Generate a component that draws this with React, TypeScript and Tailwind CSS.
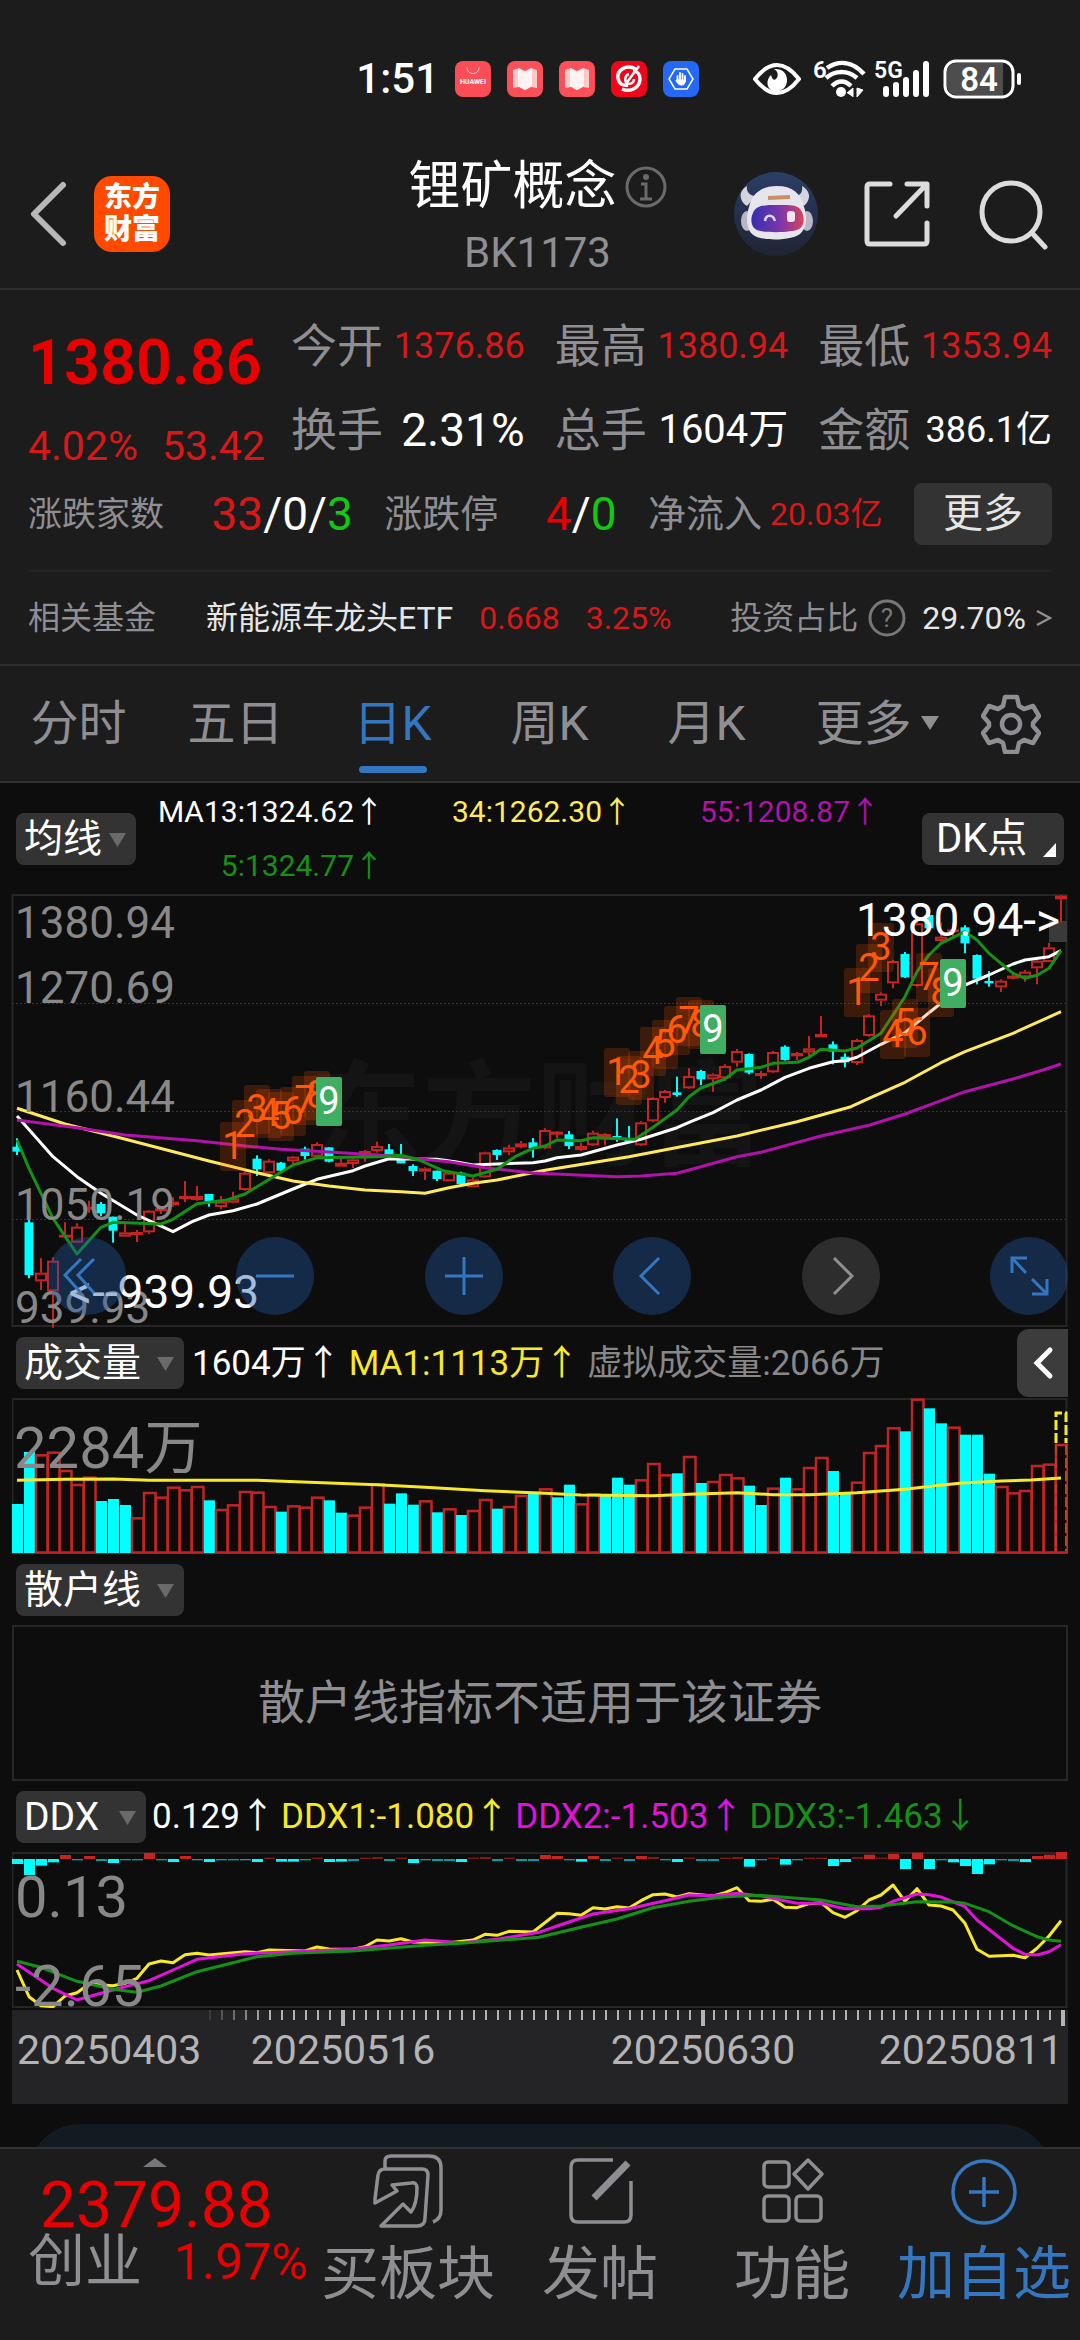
import { ReactNode } from "react";

type Kind = "c" | "r";

// [kind, high, low, body top, body bottom], in thirds of a pixel
const candles: [Kind, number, number, number, number][] = [
  ["c", 745, 795, 770, 785], ["c", 990, 1165, 997, 1155], ["r", 1105, 1200, 1148, 1174],
  ["r", 1102, 1313, 1112, 1204], ["r", 997, 1040, 1034, 1040], ["r", 1000, 1058, 1010, 1058],
  ["r", 932, 968, 950, 956], ["c", 936, 978, 942, 970], ["c", 980, 1058, 980, 1022],
  ["r", 1003, 1040, 1027, 1040], ["r", 1020, 1056, 1026, 1034], ["r", 960, 1032, 962, 1027],
  ["r", 950, 972, 955, 962], ["r", 922, 950, 935, 946], ["r", 873, 936, 918, 925],
  ["r", 888, 932, 918, 930], ["c", 912, 950, 912, 934], ["r", 918, 957, 935, 951],
  ["r", 905, 940, 925, 938], ["r", 842, 902, 848, 900], ["c", 796, 858, 806, 838],
  ["r", 808, 852, 812, 850], ["c", 816, 850, 818, 842], ["r", 798, 826, 800, 814],
  ["c", 770, 808, 776, 798], ["r", 757, 803, 762, 800], ["c", 772, 817, 772, 815],
  ["r", 800, 830, 818, 830], ["r", 798, 834, 808, 822], ["r", 780, 815, 783, 798],
  ["r", 755, 788, 768, 783], ["c", 762, 795, 778, 794], ["c", 762, 820, 810, 820],
  ["c", 823, 858, 828, 843], ["r", 832, 870, 835, 845], ["c", 842, 873, 842, 867],
  ["r", 845, 874, 848, 874], ["c", 845, 885, 848, 882], ["r", 862, 892, 868, 892],
  ["r", 785, 863, 787, 862], ["c", 778, 810, 780, 795], ["r", 764, 795, 772, 787],
  ["r", 753, 775, 760, 772], ["c", 744, 803, 757, 775], ["r", 715, 778, 720, 775],
  ["r", 723, 745, 725, 730], ["c", 723, 777, 733, 768], ["r", 758, 782, 768, 780],
  ["r", 722, 768, 728, 766], ["r", 730, 766, 732, 737], ["c", 685, 755, 738, 743],
  ["c", 708, 755, 748, 753], ["r", 693, 768, 697, 766], ["r", 622, 697, 624, 694],
  ["r", 600, 638, 603, 624], ["c", 560, 620, 607, 615], ["r", 535, 597, 558, 595],
  ["c", 540, 585, 543, 568], ["r", 550, 605, 553, 568], ["r", 523, 573, 528, 565],
  ["r", 477, 530, 483, 518], ["c", 490, 553, 492, 548], ["r", 543, 566, 549, 557],
  ["r", 482, 549, 486, 547], ["c", 466, 512, 470, 510], ["r", 486, 510, 489, 499],
  ["r", 438, 508, 475, 488], ["r", 378, 442, 432, 442], ["c", 454, 523, 463, 485],
  ["c", 490, 532, 500, 517], ["r", 446, 525, 450, 519], ["r", 373, 440, 376, 438],
  ["r", 307, 348, 311, 332], ["r", 210, 295, 213, 280], ["c", 186, 264, 192, 262],
  ["r", 95, 290, 100, 288], ["c", 68, 125, 75, 115], ["r", 97, 155, 140, 153],
  ["r", 100, 140, 118, 125], ["c", 106, 190, 112, 160], ["c", 193, 283, 195, 266],
  ["c", 243, 290, 273, 280], ["r", 268, 306, 272, 292], ["r", 250, 268, 257, 262],
  ["r", 240, 275, 245, 262], ["r", 205, 283, 212, 235], ["r", 158, 216, 172, 216],
  ["r", 15, 95, 17, 28],
];

const volumeTops = [
  552, 396, 403, 395, 450, 492, 470, 543, 537, 555, 592, 516, 530, 500, 508, 498, 541, 567, 553, 513,
  515, 558, 575, 556, 560, 530, 541, 578, 584, 560, 490, 551, 520, 554, 541, 577, 565, 585, 570, 537,
  566, 558, 525, 520, 505, 532, 494, 550, 520, 525, 473, 494, 478, 429, 463, 460, 408, 489, 483, 462,
  472, 497, 555, 503, 473, 505, 441, 411, 453, 522, 485, 396, 375, 322, 334, 236, 265, 310, 320, 344,
  344, 461, 498, 517, 510, 435, 431, 372,
];
const volumeDown = [
  0, 1, 7, 8, 9, 16, 22, 26, 27, 31, 32, 33, 35, 37, 40, 43, 45, 46, 49, 50, 51, 55, 57, 61, 62, 64,
  68, 69, 74, 76, 77, 79, 80, 81,
];

const ddxBars = [
  -15, -48, -20, -10, 12, -4, 9, -6, -12, -4, -4, 18, -4, -9, 9, -4, -9, -4, -4, -4, -9, 4, -8, -8, -4,
  4, -9, -8, -6, 4, 6, -6, 4, -12, -4, -6, -6, -9, 4, 6, -6, 4, -6, -6, 12, 9, -4, -8, 9, -6, 4, -6, 9,
  6, -4, -9, 4, -6, -6, 4, 6, -23, -4, 4, -17, -4, 4, 4, -21, -9, 6, 13, 4, 15, -30, 19, -30, -4, -10,
  -21, -45, -16, -4, -6, -9, 9, 13, 21,
];

type Series = [number, number][];

const ma13: Series = [
  [0, 678], [3, 800], [5, 860], [7, 910], [10, 975], [13, 1025], [14.6, 995], [16, 975], [18, 962],
  [20, 942], [23, 897], [25, 868], [28, 842], [29, 828], [31, 806], [35, 808], [36.5, 815], [38, 825],
  [40, 822], [43, 818], [44, 813], [45, 803], [47, 795], [50, 765], [52, 748], [55, 713], [56, 697],
  [58, 668], [60, 630], [62, 600], [64, 562], [66, 535], [68, 515], [69, 512], [70, 502], [72, 463],
  [74, 428], [76, 368], [77, 340], [79, 285], [81, 255], [83, 222], [84, 210], [86, 200], [87, 182],
];
const ma34: Series = [
  [0, 655], [4, 702], [8, 738], [16, 813], [20, 848], [23, 873], [26, 888], [29, 900], [32, 905],
  [34, 910], [36, 893], [38, 880], [40, 870], [44, 841], [51, 800], [60, 738], [65, 695], [69.5, 650],
  [71, 625], [74, 577], [77, 518], [79, 485], [83, 430], [87, 365],
];
const ma55: Series = [
  [0, 690], [5, 713], [9, 735], [15, 752], [19, 768], [22, 778], [26, 786], [31, 797], [33, 805],
  [36, 815], [39, 833], [43, 849], [50, 860], [52, 858], [55, 850], [56, 840], [60, 800], [62, 787],
  [67, 738], [71, 706], [74, 672], [77, 632], [79, 605], [83, 567], [85.5, 540], [87, 522],
];
const ma5: Series = [
  [0, 750], [1, 835], [3, 985], [5, 1092], [7, 1012], [8, 997], [12, 1002], [13, 988], [15, 941],
  [17.5, 930], [19, 912], [20, 890], [23, 825], [25, 803], [30, 800], [32, 796], [33.5, 810],
  [35.5, 842], [38, 858], [40, 838], [41.5, 800], [43, 775], [44, 768], [45, 750], [47, 752],
  [48, 743], [51.5, 748], [53, 712], [55, 660], [56, 620], [57, 594], [59, 567], [60, 540], [62, 532],
  [63, 520], [65, 517], [66, 502], [67, 478], [69, 483], [70, 474], [72, 430], [74, 320], [75, 245],
  [76, 195], [77, 160], [79, 125], [80, 150], [81, 190], [83, 250], [84, 265], [85, 256], [86, 235],
  [87, 182],
];
const volumeMa: Series = [
  [0, 481], [4, 478], [8, 477], [11, 481], [20, 481], [26, 489], [30, 494], [34, 502], [39, 512],
  [44, 520], [47, 525], [53, 527], [56, 523], [60, 518], [63, 524], [66, 524], [70, 518], [74, 508],
  [76.5, 497], [79, 488], [82, 483], [84.5, 480], [87, 474],
];
const ddx1: Series = [
  [0, 390], [1, 470], [2, 497], [3, 500], [4, 468], [5, 458], [6, 432], [8, 437], [9, 430], [10, 415],
  [11, 372], [12, 363], [13, 368], [14, 344], [15, 340], [16, 345], [19, 335], [20, 338], [21, 330],
  [24, 333], [25, 321], [26, 327], [28, 328], [29, 320], [30, 300], [31, 303], [32, 296], [33, 306],
  [36, 308], [38, 300], [39, 283], [40, 286], [41, 274], [43, 276], [45, 220], [46, 221], [47, 226],
  [48, 203], [49, 207], [50, 200], [51, 204], [52, 182], [53, 164], [54, 162], [55, 171], [56, 161],
  [58, 168], [59, 158], [60, 143], [61, 182], [62, 184], [63, 178], [64, 202], [65, 203], [66, 191],
  [67, 188], [68, 218], [69, 232], [70, 212], [71, 180], [72, 165], [73, 135], [74, 184], [75, 146],
  [76, 195], [77, 198], [78, 210], [79, 250], [80, 328], [81, 349], [83, 346], [84, 353], [85, 325],
  [86, 288], [87, 242],
];
const ddx2: Series = [
  [0, 372], [3, 445], [5, 480], [7, 460], [9, 440], [11, 422], [13, 390], [15, 358], [19, 341],
  [24, 334], [28, 327], [31, 315], [34, 300], [37, 308], [40, 298], [42, 286], [43.5, 277], [45, 258],
  [48, 222], [51, 206], [54, 182], [56, 165], [58, 167], [60, 160], [62, 168], [65, 190], [67, 190],
  [69, 206], [71, 206], [72, 202], [73, 184], [75, 162], [76, 164], [77, 171], [79, 200], [80, 240],
  [83, 325], [84, 343], [85, 345], [86, 335], [87, 314],
];
const ddx3: Series = [
  [0, 364], [2, 382], [5, 424], [8, 448], [10, 457], [12, 438], [15, 395], [17, 377], [20, 350],
  [23, 340], [28, 333], [34, 316], [37, 310], [43.5, 292], [47, 262], [50, 237], [53, 203], [56, 184],
  [59, 170], [62, 166], [65, 175], [67, 180], [70, 200], [72, 198], [75, 185], [78, 186], [79, 190],
  [81, 215], [83, 257], [85, 290], [86, 300], [87, 304],
];

// nine-turn markers: [bar index, top, digit]
const turns: [number, number, number][] = [
  [18, 232, 1], [19, 210, 2], [20, 195, 3], [21, 199, 4], [22, 202, 5], [23, 197, 6], [24, 186, 7],
  [25, 181, 8], [26, 187, 9], [50, 158, 1], [51, 166, 2], [52, 161, 3], [53, 137, 4], [54, 130, 5],
  [55, 116, 6], [56, 107, 7], [57, 110, 8], [58, 115, 9], [70, 78, 1], [71, 54, 2], [72, 33, 3],
  [73, 120, 4], [74, 109, 5], [75, 118, 6], [76, 63, 7], [77, 78, 8], [78, 69, 9],
];

const xAt = (i: number) => 17 + i * 12;
const points = (s: Series) => s.map(([i, y]) => `${xAt(i)},${(y / 3).toFixed(1)}`).join(" ");

const Line = ({ data, color }: { data: Series; color: string }) => (
  <polyline points={points(data)} fill="none" stroke={color} strokeWidth={3} strokeLinejoin="round" />
);

const Frame = ({ y, height }: { y: number; height: number }) => (
  <rect x={12.5} y={y + 1} width={1054} height={height - 2} fill="none" stroke="#262626" strokeWidth={2} />
);

const StatusBar = () => (
  <div className="flex h-[46px] items-center justify-end pr-[57px] text-white">
    <span className="mr-4 text-[42px] font-medium leading-none">1:51</span>
    <div className="flex gap-4">
      <svg width="36" height="36" viewBox="0 0 36 36">
        <rect width="36" height="36" rx="8" fill="#fb4d55" />
        <path d="M12 6.500c0 8 12 8 12 0" fill="none" stroke="#ffd9da" strokeWidth="1" />
        <text x="18" y="23" textAnchor="middle" fontSize="7" fontWeight="700" fill="#fff">HUAWEI</text>
      </svg>
      {[0, 1].map((n) => (
        <svg key={n} width="36" height="36" viewBox="0 0 36 36">
          <rect width="36" height="36" rx="8" fill="#fb5058" />
          <path d="M6 9l6-2 6 3 6-3 6 2v18l-6-1-6 3-6-3-6 1z" fill="#ffc9cb" />
          <path d="M11 7l7 4 7-4v18l-7 4-7-4z" fill="#fff3f2" />
        </svg>
      ))}
      <svg width="36" height="36" viewBox="0 0 36 36">
        <rect width="36" height="36" rx="8" fill="#f0061a" />
        <path d="M25 8C15 3 6 9 7 17c1 6 5 8 10 7" fill="none" stroke="#fff" strokeWidth="3.500" />
        <path d="M11 28c9 4 18-2 18-10 0-5-3-8-7-8" fill="none" stroke="#fff" strokeWidth="3.500" />
        <path d="M28 5L14 24M23 18c0 4-4 6-7 4s-2-8 2-9" fill="none" stroke="#fff" strokeWidth="2.500" />
      </svg>
      <svg width="36" height="36" viewBox="0 0 36 36">
        <rect width="36" height="36" rx="8" fill="#2468f5" />
        <path d="M12 8h12l6 10-6 10H12L6 18z" fill="none" stroke="#fff" strokeWidth="1.500" />
        <path d="M14.500 20v-5M17 19v-7M19.500 19v-6M22 20v-5" stroke="#fff" strokeWidth="1.800" strokeLinecap="round" />
        <path d="M13.600 18.500h9.300c0 4-2 6-4.500 6s-4-1.500-6-5z" fill="#fff" />
      </svg>
    </div>
    <svg className="ml-[54px]" width="48" height="34" viewBox="0 0 48 34">
      <path d="M2 17C9 8 16 3 24 3s15 5 22 14C39 26 32 31 24 31S9 26 2 17z" fill="none" stroke="#fff" strokeWidth="4" strokeLinejoin="round" />
      <path d="M21 7c4 2 5 7 2 10-2 2-4 0-5-4-4 4-5 10-1 14 4 4 11 3 15-2 4-6 2-14-4-17-2-1-5-1-7-1z" fill="#fff" />
    </svg>
    <svg className="ml-3 overflow-visible" width="54" height="40" viewBox="0 0 54 40">
      <text x="0" y="19" fontSize="24" fontWeight="600" fill="#fff">6</text>
      <path d="M14 9c12-8 25-7 37 6" fill="none" stroke="#fff" strokeWidth="4.500" />
      <path d="M13 19c9-8 22-8 31 0" fill="none" stroke="#fff" strokeWidth="4.500" />
      <path d="M19 27c6-6 13-6 19 0" fill="none" stroke="#fff" strokeWidth="4.500" />
      <circle cx="28" cy="33" r="5" fill="#fff" />
      <path d="M34 34l6-5v9M44 29v9l6-7z" fill="#fff" stroke="#fff" strokeWidth="1" />
    </svg>
    <svg className="ml-2 overflow-visible" width="56" height="38" viewBox="0 0 56 38">
      <text x="-1" y="18" fontSize="23" fontWeight="600" fill="#fff">5G</text>
      <path d="M11 29v5M21 25v9M31 20v14M41 13v21M51 4v30" stroke="#fff" strokeWidth="6" strokeLinecap="round" />
    </svg>
    <svg className="ml-3" width="80" height="40" viewBox="0 0 80 40">
      <rect x="2" y="2" width="68" height="36" rx="11" fill="none" stroke="#fff" strokeWidth="3" />
      <path d="M13 4h47v32H13a9 9 0 0 1-9-9V13a9 9 0 0 1 9-9z" fill="#4d4d4d" />
      <text x="36" y="32" textAnchor="middle" fontSize="33" fontWeight="600" fill="#fff">84</text>
      <rect x="74" y="14" width="4" height="12" rx="2" fill="#fff" />
    </svg>
  </div>
);

const RobotIcon = () => (
  <svg width="86" height="86" viewBox="0 0 86 86">
    <defs>
      <linearGradient id="robot-bg" x1="0" y1="0" x2="0" y2="1">
        <stop offset="0" stopColor="#2b3e66" />
        <stop offset="1" stopColor="#1e2432" />
      </linearGradient>
      <linearGradient id="robot-visor" x1="0" y1="0" x2="1" y2="0">
        <stop offset="0" stopColor="#3530b0" />
        <stop offset=".55" stopColor="#7d35a8" />
        <stop offset="1" stopColor="#d8455c" />
      </linearGradient>
    </defs>
    <circle cx="43" cy="43" r="42" fill="url(#robot-bg)" />
    <path d="M14 15c-9 5-8 15 0 20l9-10c-6 0-10-4-9-10zM69 15c9 5 9 14 2 20l-9-10c5 0 8-4 7-10z" fill="#d5d3df" />
    <ellipse cx="14" cy="50" rx="6" ry="10" fill="#b9b7c6" />
    <ellipse cx="74" cy="50" rx="6" ry="10" fill="#b9b7c6" />
    <path d="M16 36c3-14 13-21 28-21s24 7 27 21c3 8 3 20-3 26-7 8-41 9-49 1-6-6-6-18-3-27z" fill="#e6e4ec" />
    <path d="M35 27l22-1" stroke="#c98f62" strokeWidth="4" />
    <path d="M20 42c3-8 12-8 24-8s22-1 25 7c3 7 2 14-3 17-7 4-35 4-42 1-6-3-7-11-4-17z" fill="url(#robot-visor)" />
    <path d="M32 50c1-7 8-7 10 0" fill="none" stroke="#d9d6ff" strokeWidth="2.500" />
    <rect x="54" y="40" width="8" height="11" rx="3" fill="#f4e4f4" />
  </svg>
);

const Header = () => (
  <header className="flex h-[188px] items-start border-b-2 border-[#2f2f2f] pt-[39px]">
    <div className="flex flex-1 items-center pl-[26px] pt-[35px]">
      <button aria-label="返回">
        <svg width="42" height="76" viewBox="0 0 42 76">
          <path d="M37 9L8 38l29 29" fill="none" stroke="#b8b8b8" strokeWidth="6" strokeLinecap="round" strokeLinejoin="round" />
        </svg>
      </button>
      <button className="ml-[26px] flex h-[76px] w-[76px] flex-col items-center justify-center rounded-[18px] bg-[#ff4a00] text-[28px] font-black leading-8 text-white">
        <span>东方</span>
        <span>财富</span>
      </button>
    </div>
    <div className="flex flex-col items-center">
      <div className="flex items-center gap-2">
        <h1 className="text-[52px] leading-[92px] text-white">锂矿概念</h1>
        <svg width="42" height="42" viewBox="0 0 42 42">
          <circle cx="21" cy="21" r="19" fill="none" stroke="#6a6a6a" strokeWidth="3" />
          <circle cx="21" cy="11" r="3" fill="#6a6a6a" />
          <path d="M16 18h5v15M15 33h12" fill="none" stroke="#6a6a6a" strokeWidth="3" />
        </svg>
      </div>
      <span className="text-[42px] leading-10 text-[#8e8e93]">BK1173</span>
    </div>
    <div className="flex flex-1 items-center justify-end pr-[31px] pt-[30px]">
      <button aria-label="助手"><RobotIcon /></button>
      <button className="ml-11" aria-label="分享">
        <svg width="70" height="70" viewBox="0 0 70 70" fill="none" stroke="#dcdcdc" strokeWidth="5" strokeLinecap="round" strokeLinejoin="round">
          <path d="M27 5H7q-3 0-3 3v54q0 3 3 3h54q3 0 3-3V44M44 5h20v22M62 7L33 37" />
        </svg>
      </button>
      <button className="ml-11" aria-label="搜索">
        <svg width="72" height="72" viewBox="0 0 72 72" fill="none" stroke="#dcdcdc" strokeWidth="5" strokeLinecap="round">
          <circle cx="34" cy="34" r="29" />
          <path d="M55 55l13 14" />
        </svg>
      </button>
    </div>
  </header>
);

const QuoteCell = ({ label, children }: { label: string; children: ReactNode }) => (
  <div className="flex h-[84px] items-center justify-between text-white">
    <span className="text-[46px] text-[#8e8e93]">{label}</span>
    {children}
  </div>
);

const Quote = () => (
  <section className="border-b-2 border-[#2f2f2f] pl-7 pr-[28px] pt-[14px] leading-none">
    <div className="flex items-start">
      <div className="w-[263px] pt-4 text-[#d81818]">
        <div className="flex h-[84px] items-center text-[63px] font-semibold text-[#e90000]">1380.86</div>
        <div className="flex h-[84px] items-center gap-6 text-[41px]">
          <span>4.02%</span>
          <span>53.42</span>
        </div>
      </div>
      <div className="grid flex-1 grid-cols-3 gap-x-[30px]">
        <QuoteCell label="今开"><span className="text-[36px] text-[#d81818]">1376.86</span></QuoteCell>
        <QuoteCell label="最高"><span className="text-[36px] text-[#d81818]">1380.94</span></QuoteCell>
        <QuoteCell label="最低"><span className="text-[36px] text-[#d81818]">1353.94</span></QuoteCell>
        <QuoteCell label="换手"><span className="text-[46px]">2.31%</span></QuoteCell>
        <QuoteCell label="总手"><span className="text-[40px]">1604万</span></QuoteCell>
        <QuoteCell label="金额"><span className="text-[36px]">386.1亿</span></QuoteCell>
      </div>
    </div>
    <div className="-mt-4 flex h-[84px] items-center justify-between text-[38px] text-[#8e8e93]">
      <span className="text-[34px]">涨跌家数</span>
      <span className="ml-4 text-[46px] text-white">
        <span className="text-[#d81818]">33</span>/0/<span className="text-[#12c812]">3</span>
      </span>
      <span>涨跌停</span>
      <span className="ml-4 text-[46px] text-white">
        <span className="text-[#e90000]">4</span>/<span className="text-[#12c812]">0</span>
      </span>
      <span className="flex items-center gap-2">
        净流入<span className="text-[32px] text-[#d81818]">20.03亿</span>
      </span>
      <button className="h-[62px] w-[138px] rounded-lg bg-[#333] text-[40px] text-[#e6e6e6]">更多</button>
    </div>
    <a href="#fund" className="mt-[14px] flex h-[94px] items-center border-t-2 border-[#232323] text-[32px] text-[#8e8e93]">
      <span>相关基金</span>
      <span className="ml-[50px] text-[#e6e6e6]">新能源车龙头ETF</span>
      <span className="ml-[26px] text-[#d81818]">0.668</span>
      <span className="ml-[26px] text-[#d81818]">3.25%</span>
      <span className="ml-auto">投资占比</span>
      <svg className="ml-[10px]" width="38" height="38" viewBox="0 0 38 38">
        <circle cx="19" cy="19" r="17" fill="none" stroke="#77777b" strokeWidth="3" />
        <text x="19" y="28" textAnchor="middle" fontSize="26" fill="#77777b">?</text>
      </svg>
      <span className="ml-4 text-[#e6e6e6]">29.70%</span>
      <svg className="ml-[10px]" width="16" height="20" viewBox="0 0 16 20">
        <path d="M1 3l13 7-13 7" fill="none" stroke="#8e8e93" strokeWidth="2.500" />
      </svg>
    </a>
  </section>
);

const periods = ["分时", "五日", "日K", "周K", "月K", "更多"];

const Periods = () => (
  <nav className="flex h-[117px] items-center border-b-2 border-[#2f2f2f] text-[48px] leading-none text-[#8e8e93]">
    {periods.map((name) => (
      <button key={name} className={`relative h-full flex-1 ${name === "日K" ? "text-[#3576c0]" : ""}`}>
        {name}
        {name === "日K" && <span className="absolute inset-x-0 bottom-2 mx-auto h-[7px] w-[68px] rounded-full bg-[#3576c0]" />}
        {name === "更多" && (
          <svg className="absolute right-[3px] top-[50px]" width="18" height="14" viewBox="0 0 18 14">
            <path d="M0 0h18L9 14z" fill="#8e8e93" />
          </svg>
        )}
      </button>
    ))}
    <button className="flex w-[138px] justify-center" aria-label="设置">
      <svg width="60" height="60" viewBox="0 0 60 60" fill="none" stroke="#8e8e93" strokeWidth="4.500" strokeLinejoin="round">
        <path d="M24 3h12l2 9 5 3 9-3 6 10-6 7v3l6 7-6 10-9-3-5 3-2 9H24l-2-9-5-3-9 3-6-10 6-7v-3l-6-7 6-10 9 3 5-3z" />
        <circle cx="30" cy="30" r="9" />
      </svg>
    </button>
  </nav>
);

const Picker = ({ label, options, width }: { label: string; options: string[]; width: string }) => (
  <label className={`relative shrink-0 ${width}`}>
    <select aria-label={label} className="h-[52px] w-full appearance-none rounded-lg bg-[#333] pl-2 text-[39px] leading-[52px] text-white">
      {options.map((o) => (
        <option key={o}>{o}</option>
      ))}
    </select>
    <svg className="pointer-events-none absolute right-[10px] top-5" width="17" height="14" viewBox="0 0 17 14">
      <path d="M0 0h17L8.500 14z" fill="#6a6a6a" />
    </svg>
  </label>
);

const round = "flex h-[78px] w-[78px] items-center justify-center rounded-full";

const ChartControls = () => (
  <div className="absolute bottom-[13px] left-9 right-0 flex justify-between text-[#3576c0]">
    {[
      { label: "最早", d: "M33 22L17 38l16 18M46 22L30 38l16 18" },
      { label: "缩小", d: "M20 39h38" },
      { label: "放大", d: "M20 39h38M39 20v38" },
      { label: "左移", d: "M46 21L28 39l18 18" },
      { label: "右移", d: "M32 21l18 18-18 18", muted: true },
      { label: "全屏", d: "M37 21H22v15M23 22l13 14M42 57h15V42M56 56L42 42" },
    ].map(({ label, d, muted }) => (
      <button
        key={label}
        aria-label={label}
        className={`${round} ${muted ? "bg-[#6a6a6a]/35 text-[#8e8e93]" : "bg-[#2058a0]/40"}`}
      >
        <svg width="78" height="78" viewBox="0 0 78 78" fill="none" stroke="currentColor" strokeWidth="3">
          <path d={d} />
        </svg>
      </button>
    ))}
  </div>
);

const PriceChart = () => (
  <div className="relative">
    <svg className="block w-full overflow-visible" viewBox="12 5 1056 433">
      <text x="308" y="266" fontSize="114" fontWeight="700" fill="#141414">东方财富</text>
      <Frame y={4} height={433} />
      {[113, 221, 329].map((y) => (
        <path key={y} d={`M12 ${y + 0.5}H1067`} stroke="#333" strokeDasharray="2 2" />
      ))}
      <rect x="1049" y="31" width="18" height="21" fill="#3a3a3a" />
      {candles.map(([kind, high, low, top, bottom], i) => {
        const x = xAt(i);
        const body = Math.max((bottom - top) / 3, 2);
        return kind === "c" ? (
          <g key={i} fill="#00ffff">
            <rect x={x - 1} y={high / 3} width={2} height={(low - high) / 3} />
            <rect x={x - 4.5} y={top / 3} width={9} height={body} />
          </g>
        ) : (
          <g key={i} stroke="#c82323" strokeWidth={2} fill="none">
            <path d={`M${x} ${high / 3}V${top / 3}M${x} ${bottom / 3}V${low / 3}`} />
            <rect x={x - 5} y={top / 3 + 1} width={10} height={Math.max(body - 2, 1)} />
          </g>
        );
      })}
      <Line data={ma13} color="#fff" />
      <Line data={ma34} color="#ffe95c" />
      <Line data={ma55} color="#b012ab" />
      <Line data={ma5} color="#169016" />
      {turns.map(([i, y, n]) => (
        <g key={i}>
          <rect x={xAt(i) - 13} y={y} width="26" height="49" rx={n === 9 ? 2 : 3} fill={n === 9 ? "#3fae62" : "#ff5500"} fillOpacity={n === 9 ? 1 : 0.2} />
          <text x={xAt(i)} y={y + 37} textAnchor="middle" fontSize="38" fill={n === 9 ? "#fff" : "#ff5a0a"}>{n}</text>
        </g>
      ))}
      <g fontSize="44" fill="#888">
        <text x="15" y="48">1380.94</text>
        <text x="15" y="113">1270.69</text>
        <text x="15" y="222">1160.44</text>
        <text x="15" y="330">1050.19</text>
        <text x="15" y="433">939.93</text>
      </g>
      <g fontSize="46" fill="#fff">
        <text x="1060" y="46" textAnchor="end">1380.94-&gt;</text>
        <text x="259" y="418" textAnchor="end">&lt;--939.93</text>
      </g>
    </svg>
    <ChartControls />
  </div>
);

const VolumeChart = () => (
  <svg className="block w-full" viewBox="12 78 1056 156">
    <Frame y={78} height={156} />
    {volumeTops.map((v, i) => {
      const y = v / 3;
      return volumeDown.includes(i) ? (
        <rect key={i} x={12 + i * 12} y={y} width={11} height={233 - y} fill="#00ffff" />
      ) : (
        <rect key={i} x={12 + i * 12} y={y + 1} width={11.5} height={231.5 - y} fill="#0f0a0a" stroke="#c02424" strokeWidth={2.5} />
      );
    })}
    <path d="M1056 123V93h10v30" fill="none" stroke="#f7e92a" strokeWidth="3" strokeDasharray="10 3" />
    <path d="M1056 125v106M1066 125v106" stroke="#b5451e" strokeWidth="2" strokeDasharray="10 3" />
    <Line data={volumeMa} color="#f7e92a" />
    <text x="14" y="148" fontSize="58" fill="#888">2284万</text>
  </svg>
);

const DdxChart = () => (
  <svg className="block w-full" viewBox="12 12 1056 156">
    <Frame y={12} height={156} />
    {ddxBars.map((v, i) => (
      <rect
        key={i}
        x={12 + i * 12}
        y={v > 0 ? 19 - v / 3 : 19}
        width={11}
        height={Math.abs(v) / 3}
        fill={v > 0 ? "#c82323" : "#00ffff"}
        opacity={Math.abs(v) < 7 ? 0.6 : 1}
      />
    ))}
    <Line data={ddx1} color="#f7e92a" />
    <Line data={ddx2} color="#e112dc" />
    <Line data={ddx3} color="#169016" />
    <g fontSize="58" fill="#888">
      <text x="15" y="77">0.13</text>
      <text x="15" y="166">-2.65</text>
    </g>
  </svg>
);

const TimeAxis = () => (
  <svg className="mt-[2px] block w-full bg-[#242426]" viewBox="12 0 1056 94">
    {Array.from({ length: 72 }, (_, n) => n + 16).map((i) => {
      const major = i === 27 || i === 57 || i === 87;
      return (
        <rect
          key={i}
          x={17 + i * 12}
          y={0}
          width={major ? 4 : 2}
          height={major ? 16 : 10}
          fill="#b4b4b4"
          opacity={Math.min(1, (i - 15) / 6)}
        />
      );
    })}
    <g fontSize="41" fill="#b4b4b4">
      <text x="17" y="54">20250403</text>
      <text x="343" y="54" textAnchor="middle">20250516</text>
      <text x="703" y="54" textAnchor="middle">20250630</text>
      <text x="1063" y="54" textAnchor="end">20250811</text>
    </g>
  </svg>
);

const indicators = ["均线", "BOLL"];
const subIndicators = ["成交量", "散户线", "DDX"];
const optionsFrom = (first: string) => [first, ...subIndicators.filter((s) => s !== first)];

const actions = [
  {
    label: "买板块",
    icon: <path d="M16 15V8q0-5 6-5h38q12 0 12 12v42q0 9-8 12M6 46L9 22q1-6 7-6h37q6 0 6 6l-3 43q0 8-8 8H12l22-22 8 8q6-8 6-24 0-6-6-5l-19 2 5 6L6 50z" />,
  },
  {
    label: "发帖",
    icon: (
      <>
        <path d="M52 7H17q-7 0-7 7v48q0 7 7 7h46q7 0 7-7V28" />
        <path d="M67 10L33 45" strokeWidth="7" />
      </>
    ),
  },
  {
    label: "功能",
    icon: (
      <>
        <rect x="11" y="9" width="25" height="25" rx="4" />
        <rect x="11" y="43" width="25" height="25" rx="4" />
        <rect x="43" y="43" width="25" height="25" rx="4" />
        <path d="M55 7l14 14-14 15-14-15z" />
      </>
    ),
  },
  {
    label: "加自选",
    active: true,
    icon: (
      <>
        <circle cx="39" cy="39" r="31" />
        <path d="M24 39h30M39 24v30" />
      </>
    ),
  },
];

const BottomBar = () => (
  <footer className="flex h-[193px] border-t-2 border-[#333] bg-[#1c1c1c] leading-none">
    <button className="flex w-[312px] flex-col items-start pl-7 pt-[9px] text-[#e90000]">
      <svg className="ml-[115px]" width="24" height="9" viewBox="0 0 24 9">
        <path d="M12 0l12 9H0z" fill="#77777b" />
      </svg>
      <span className="pl-3 pt-2 text-[64px] leading-[62px]">2379.88</span>
      <span className="flex w-full items-center gap-8 whitespace-nowrap text-[50px] leading-[50px]">
        <span className="text-[57px] text-[#8e8e93]">创业</span>1.97%
      </span>
    </button>
    {actions.map(({ label, icon, active }) => (
      <button
        key={label}
        className={`flex flex-1 flex-col items-center whitespace-nowrap pt-1 text-[58px] ${active ? "text-[#3576c0]" : "text-[#8e8e93]"}`}
      >
        <svg width="78" height="78" viewBox="0 0 78 78" fill="none" stroke="currentColor" strokeWidth="3.500" strokeLinejoin="round">
          {icon}
        </svg>
        <span className="mt-[14px]">{label}</span>
      </button>
    ))}
  </footer>
);

const App = () => (
  <div className="bg-[#0d0d0d] font-[Roboto,'Noto_Sans_CJK_SC',sans-serif]">
    <div className="bg-[#1c1c1c] pt-14">
      <StatusBar />
      <Header />
      <Quote />
      <Periods />
    </div>

    <div className="flex h-[112px] items-center px-4">
      <Picker label="主图指标" options={indicators} width="w-[120px]" />
      <div className="grid flex-1 grid-cols-3 text-right text-[30px] leading-[54px]">
        <span className="text-white">MA13:1324.62↑</span>
        <span className="text-[#ffe95c]">34:1262.30↑</span>
        <span className="text-[#b012ab]">55:1208.87↑</span>
        <span className="text-[#169016]">5:1324.77↑</span>
      </div>
      <button className="relative ml-[42px] h-[52px] w-[142px] rounded-lg bg-[#333] pl-[14px] text-left text-[40px] leading-[52px] text-white">
        DK点
        <svg className="absolute bottom-2 right-2" width="13" height="14" viewBox="0 0 13 14">
          <path d="M13 0v14H0z" fill="#fff" />
        </svg>
      </button>
    </div>

    <main className="px-3">
      <PriceChart />
      <div className="flex h-[70px] items-center gap-2 pl-1 text-[35px] leading-none">
        <Picker label="副图指标一" options={optionsFrom("成交量")} width="w-[168px]" />
        <span className="text-white">1604万↑</span>
        <span className="text-[#f7e92a]">MA1:1113万↑</span>
        <span className="text-[#888]">虚拟成交量:2066万</span>
        <button className="ml-auto flex h-[68px] w-[51px] items-center justify-center rounded-l-xl bg-[#3c3c3c]" aria-label="展开">
          <svg width="24" height="34" viewBox="0 0 24 34">
            <path d="M19 4L6 17l13 13" fill="none" stroke="#fff" strokeWidth="5" strokeLinecap="round" />
          </svg>
        </button>
      </div>
      <VolumeChart />
      <div className="flex h-[71px] items-center pl-1">
        <Picker label="副图指标二" options={optionsFrom("散户线")} width="w-[168px]" />
      </div>
      <div className="flex h-[156px] items-center justify-center border-2 border-[#262626] text-[47px] text-[#8e8e93]">
        散户线指标不适用于该证券
      </div>
      <div className="flex h-[71px] items-center gap-[6px] whitespace-nowrap pl-1 text-[35px] leading-none">
        <Picker label="副图指标三" options={optionsFrom("DDX")} width="w-[130px]" />
        <span className="text-white">0.129↑</span>
        <span className="text-[#f7e92a]">DDX1:-1.080↑</span>
        <span className="text-[#e112dc]">DDX2:-1.503↑</span>
        <span className="text-[#169016]">DDX3:-1.463↓</span>
      </div>
      <DdxChart />
      <TimeAxis />
      <div className="mt-5 h-[23px] overflow-hidden px-4">
        <div className="h-32 rounded-[52px] bg-[#121a22]" />
      </div>
    </main>

    <BottomBar />
  </div>
);

export default App;
